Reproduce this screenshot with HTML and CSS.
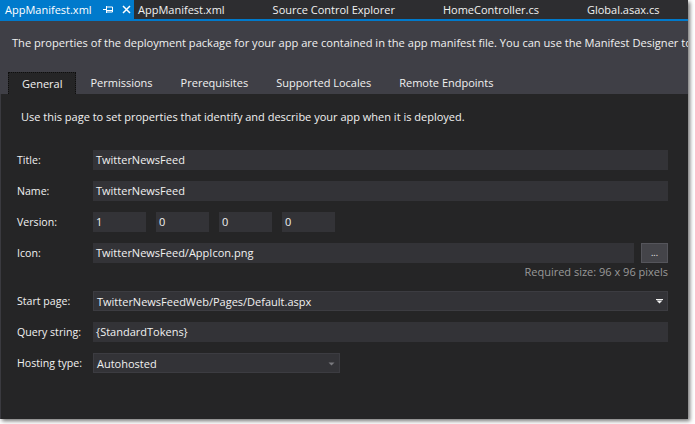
FILE: index.html
```html
<!DOCTYPE html>
<html>
<head>
<meta charset="utf-8">
<link rel="stylesheet" href="styles.css">
</head>
<body>
<div class="window">
  <div class="doc-tabs">
    <div class="doc-tab active">
      <span class="doc-title">AppManifest.xml</span>
      <svg class="pin" width="11" height="9" viewBox="0 0 11 9"><path d="M0 4.5h3.5M3.5 1v7M3.5 2h6v5h-6" fill="none" stroke="#fff" stroke-width="1"/><path d="M3.5 5.5h6" stroke="#fff" stroke-width="1"/></svg>
      <svg class="close" width="9" height="9" viewBox="0 0 9 9"><path d="M1 1l7 7M8 1l-7 7" stroke="#fff" stroke-width="1.5"/></svg>
    </div>
    <div class="doc-tab">AppManifest.xml</div>
    <div class="doc-tab">Source Control Explorer</div>
    <div class="doc-tab">HomeController.cs</div>
    <div class="doc-tab">Global.asax.cs</div>
  </div>
  <div class="header">
    <p class="desc">The properties of the deployment package for your app are contained in the app manifest file. You can use the Manifest Designer to set or modify one or more of the properties.</p>
    <div class="page-tabs">
      <div class="page-tab selected">General</div>
      <div class="page-tab">Permissions</div>
      <div class="page-tab">Prerequisites</div>
      <div class="page-tab">Supported Locales</div>
      <div class="page-tab">Remote Endpoints</div>
    </div>
  </div>
  <div class="content">
    <p class="intro">Use this page to set properties that identify and describe your app when it is deployed.</p>
    <div class="form">
      <div class="row">
        <span class="label">Title:</span>
        <div class="field">TwitterNewsFeed</div>
      </div>
      <div class="row">
        <span class="label">Name:</span>
        <div class="field">TwitterNewsFeed</div>
      </div>
      <div class="row">
        <span class="label">Version:</span>
        <div class="version">
          <div class="field small">1</div>
          <div class="field small">0</div>
          <div class="field small">0</div>
          <div class="field small">0</div>
        </div>
      </div>
      <div class="row">
        <span class="label">Icon:</span>
        <div class="field grow">TwitterNewsFeed/AppIcon.png</div>
        <div class="browse">...</div>
      </div>
      <div class="hint">Required size: 96 x 96 pixels</div>
      <div class="row">
        <span class="label">Start page:</span>
        <div class="field select">TwitterNewsFeedWeb/Pages/Default.aspx
          <svg class="arrow" width="7" height="5" viewBox="0 0 7 5"><path d="M0 0.5h7" stroke="#f1f1f1" stroke-width="1"/><path d="M0.5 1.5h6l-3 3z" fill="#f1f1f1"/></svg>
        </div>
      </div>
      <div class="row">
        <span class="label">Query string:</span>
        <div class="field">{StandardTokens}</div>
      </div>
      <div class="row">
        <span class="label">Hosting type:</span>
        <div class="field select short">Autohosted
          <svg class="arrow" width="7" height="5" viewBox="0 0 7 5"><path d="M0.5 1.5h6l-3 3z" fill="#7a7a7f"/></svg>
        </div>
      </div>
    </div>
  </div>
</div>
</body>
</html>
```

FILE: styles.css
```css
* { box-sizing: border-box; }
html, body { margin: 0; padding: 0; }
body {
  background: #ffffff;
  width: 695px;
  height: 424px;
  overflow: hidden;
  font-family: "Segoe UI", "Open Sans", sans-serif;
  font-size: 11px;
  color: #f1f1f1;
}
.window {
  width: 688px;
  height: 419px;
  background: #252526;
  box-shadow: 2px 2px 4px rgba(0,0,0,0.55);
  display: flex;
  flex-direction: column;
  overflow: hidden;
}
.doc-tabs {
  height: 21px;
  flex: none;
  background: #2d2d30;
  border-bottom: 2px solid #007acc;
  display: flex;
  align-items: stretch;
  white-space: nowrap;
}
.doc-tab {
  padding: 0 24px;
  line-height: 19px;
  font-size: 11px;
  color: #f1f1f1;
  flex: none;
}
.doc-tab.active {
  background: #007acc;
  color: #fff;
  width: 134px;
  padding: 0 0 0 5px;
  display: flex;
  align-items: center;
  margin-right: -20px;
}
.doc-title { flex: none; }
.pin { margin-left: 11px; flex: none; }
.close { margin-left: 8px; flex: none; }
.header {
  background: #3f3f46;
  flex: none;
  height: 73px;
  display: flex;
  flex-direction: column;
  padding-left: 8px;
}
.desc {
  margin: 13px 0 0 4px;
  line-height: 18px;
  white-space: nowrap;
  font-size: 11.1px;
  color: #f1f1f1;
}
.page-tabs {
  margin-top: auto;
  display: flex;
  height: 22px;
}
.page-tab {
  padding: 0 14px;
  line-height: 22px;
  font-size: 11px;
  color: #f1f1f1;
  white-space: nowrap;
}
.page-tab.selected {
  background: #252526;
  border: 1px dotted #0e0e0e;
  border-bottom: none;
  padding: 0 13px;
  line-height: 21px;
}
.content {
  flex: 1;
  border-left: 1px solid #3a3a3f;
  padding: 14px 20px 0 16px;
}
.intro {
  margin: 0 0 0 4px;
  line-height: 18px;
  font-size: 11px;
}
.form {
  margin-top: 24px;
  display: flex;
  flex-direction: column;
  gap: 11px;
}
.row {
  display: flex;
  align-items: center;
  height: 20px;
}
.label {
  width: 76px;
  flex: none;
  font-size: 10.6px;
  color: #f1f1f1;
}
.field {
  flex: 1;
  height: 20px;
  background: #333337;
  line-height: 19px;
  padding: 0 3px;
  font-size: 11px;
  color: #f1f1f1;
  white-space: nowrap;
}
.version {
  display: flex;
  gap: 10px;
}
.field.small {
  flex: none;
  width: 53px;
}
.field.grow { flex: 1; }
.browse {
  flex: none;
  width: 27px;
  height: 20px;
  margin-left: 7px;
  background: #444449;
  border: 1px solid #55555b;
  color: #f1f1f1;
  font-size: 9px;
  text-align: center;
  line-height: 17px;
}
.hint {
  margin-top: -9px;
  margin-bottom: 1px;
  text-align: right;
  color: #999999;
  font-size: 11px;
  line-height: 14px;
}
.field.select {
  display: flex;
  align-items: center;
  justify-content: space-between;
  border: 1px solid #3c3c41;
  padding: 0 4px 0 3px;
}
.field.short {
  flex: none;
  width: 247px;
}
.arrow { flex: none; }
```
